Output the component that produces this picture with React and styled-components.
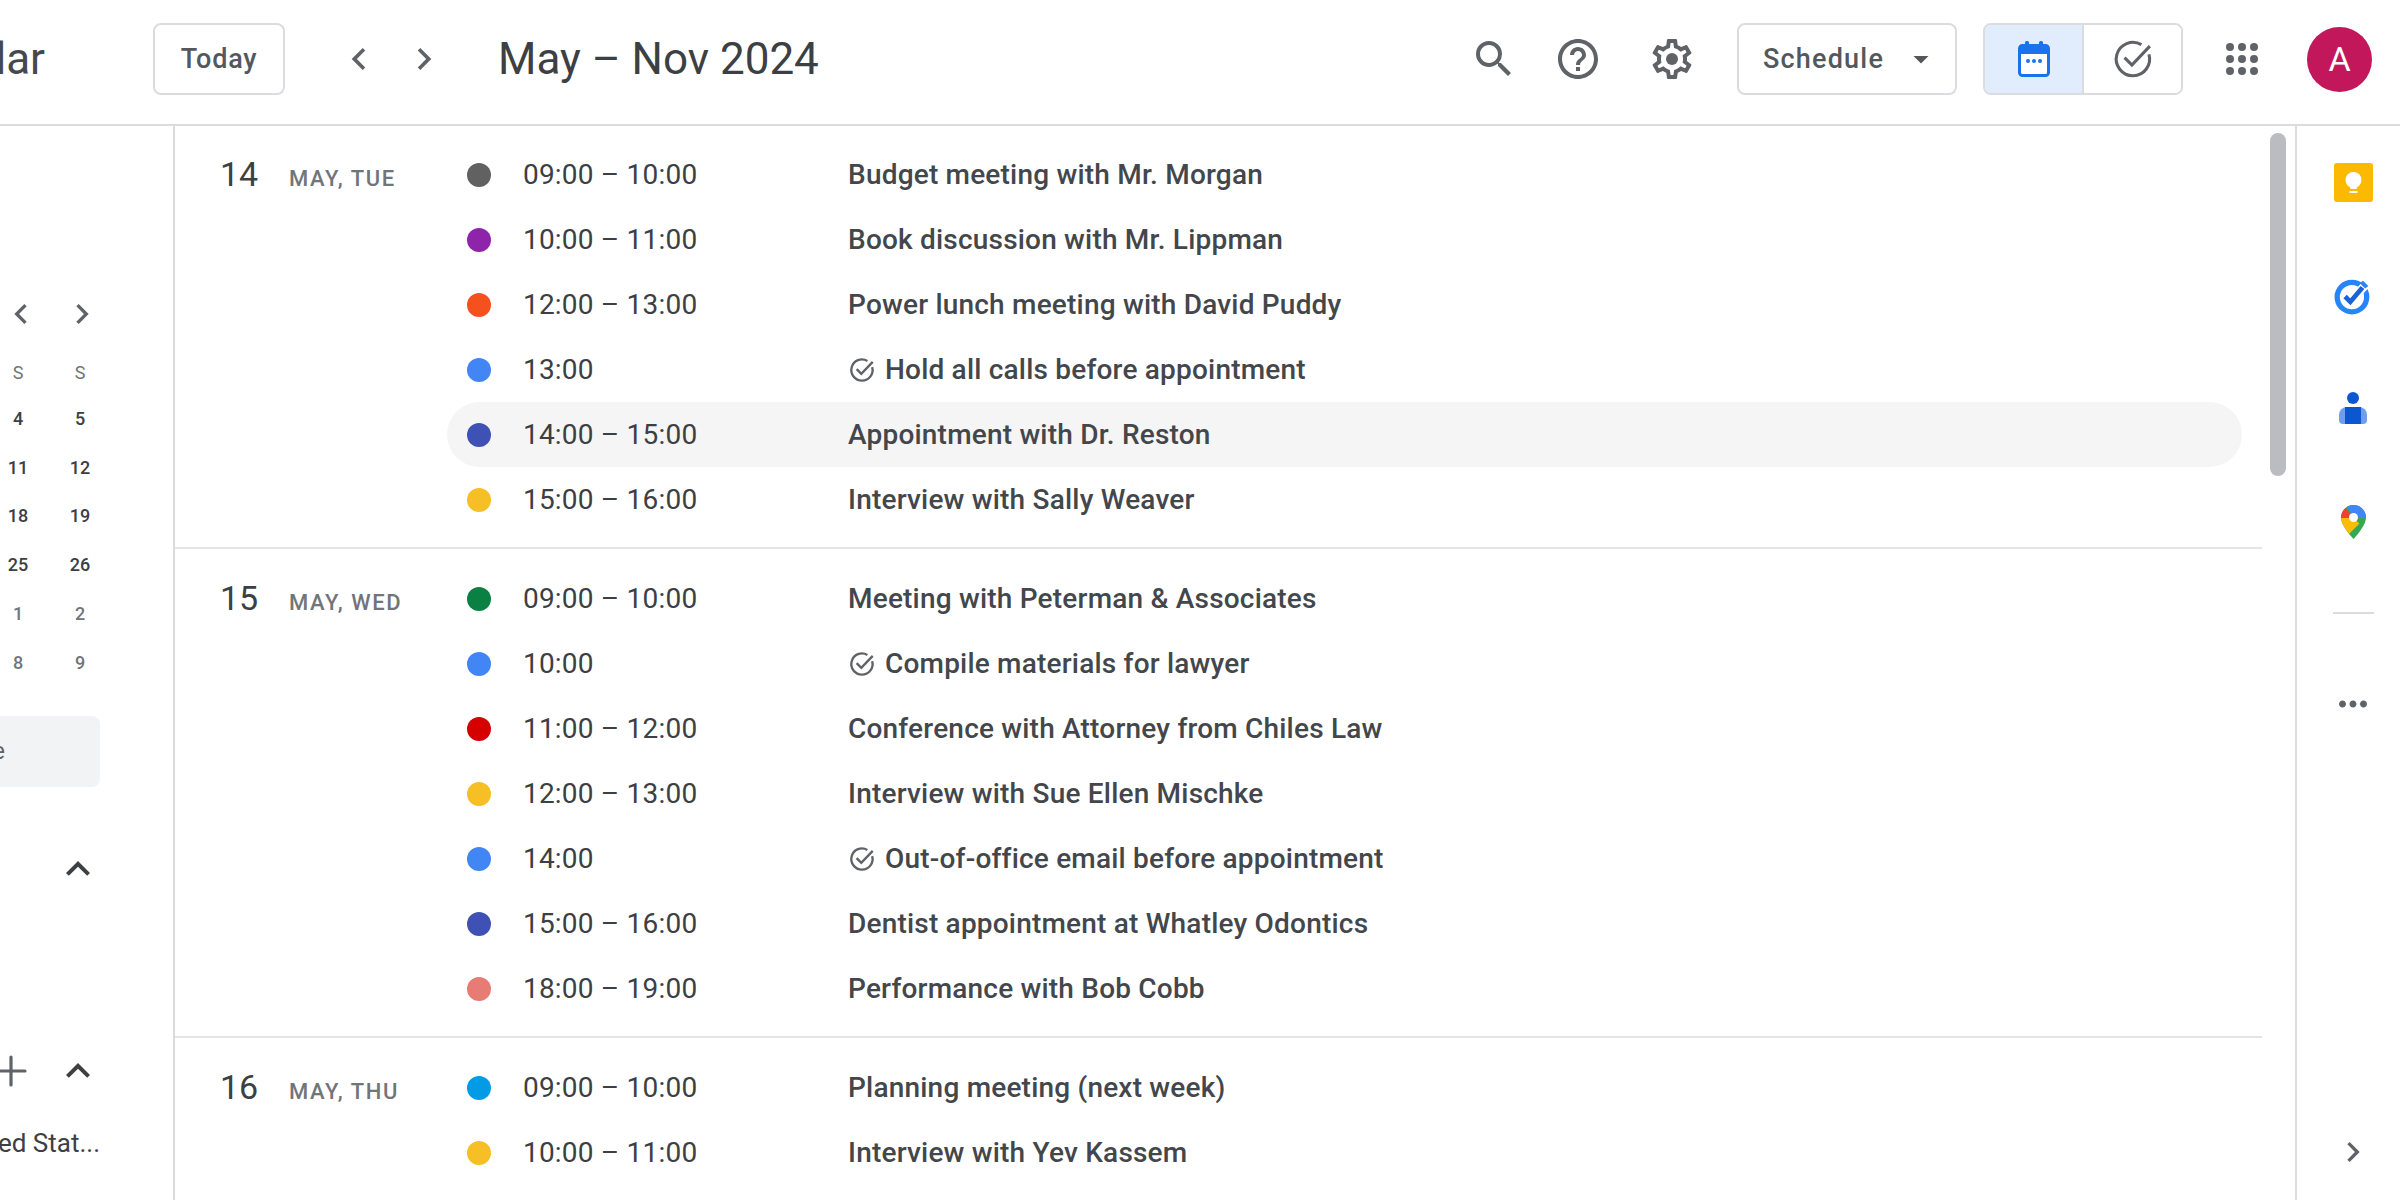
import React from "react";
import styled, { createGlobalStyle } from "styled-components";
import {
	MdChevronLeft,
	MdChevronRight,
	MdSearch,
	MdHelpOutline,
	MdArrowDropDown,
	MdExpandLess,
	MdMoreHoriz,
} from "react-icons/md";
import { Plus } from "lucide-react";

const GlobalStyle = createGlobalStyle`
	html, body {
		margin: 0;
		padding: 0;
		background: #fff;
	}
	body {
		font-family: Roboto, "Liberation Sans", sans-serif;
		color: #3c4043;
	}
`;

const Page = styled.div`
	width: 100%;
	height: 100vh;
	display: flex;
	flex-direction: column;
	overflow: hidden;
`;

const Header = styled.header`
	height: 118px;
	flex: none;
	display: flex;
	align-items: center;
	border-bottom: 2px solid #dadce0;
	padding: 0 28px 6px 0;
`;

const Brand = styled.div`
	width: 45px;
	flex: none;
	display: flex;
	justify-content: flex-end;
	overflow: hidden;
	font-size: 44px;
	line-height: 56px;
	color: #45494d;
`;

const OutlineButton = styled.div`
	height: 72px;
	box-sizing: border-box;
	border: 2px solid #dadce0;
	border-radius: 8px;
	display: flex;
	align-items: center;
	font-size: 27px;
	font-weight: 500;
	letter-spacing: ${({ $spacing }) => $spacing || 0.8}px;
	color: #54585c;
	background: #fff;
`;

const TodayButton = styled(OutlineButton)`
	width: 132px;
	margin-left: 108px;
	justify-content: center;
`;

const ScheduleButton = styled(OutlineButton)`
	width: 220px;
	margin-left: 41px;
	padding-left: 24px;
	gap: 19px;
`;

const IconButton = styled.div`
	width: 48px;
	height: 48px;
	flex: none;
	margin-left: ${({ $gap }) => $gap || 0}px;
	display: flex;
	align-items: center;
	justify-content: center;
	color: #5f6368;
`;

const Title = styled.h1`
	margin: 0 0 0 50px;
	font-size: 44px;
	line-height: 56px;
	font-weight: 400;
	color: #3c4043;
	white-space: nowrap;
`;

const RightTools = styled.div`
	margin-left: auto;
	display: flex;
	align-items: center;
`;

const Segmented = styled.div`
	width: 200px;
	height: 72px;
	margin-left: 26px;
	box-sizing: border-box;
	border: 2px solid #dadce0;
	border-radius: 8px;
	display: flex;
	overflow: hidden;
`;

const Segment = styled.div`
	flex: 1;
	display: flex;
	align-items: center;
	justify-content: center;
	background: ${({ $active }) => ($active ? "#e1edfc" : "#fff")};
	color: #5f6368;

	& + & {
		border-left: 2px solid #dadce0;
	}
`;

const Avatar = styled.div`
	width: 65px;
	height: 65px;
	margin-left: 41px;
	border-radius: 50%;
	background: #c2185b;
	color: #fff;
	font-size: 34px;
	display: flex;
	align-items: center;
	justify-content: center;
`;

const Body = styled.div`
	flex: 1;
	min-height: 0;
	display: flex;
`;

const Sidebar = styled.aside`
	width: 175px;
	flex: none;
	box-sizing: border-box;
	border-right: 2px solid #dadce0;
	overflow: hidden;
	display: flex;
	flex-direction: column;
	padding-top: 168px;
`;

const MiniNav = styled.div`
	height: 40px;
	flex: none;
	display: flex;
	justify-content: flex-end;
	align-items: center;
	gap: 21px;
	padding-right: 71px;
	color: #5f6368;
`;

const MiniGrid = styled.div`
	margin-top: 16px;
	padding-right: 62px;
	display: grid;
	justify-content: end;
	grid-template-columns: 62px 62px;
	grid-template-rows: 44px repeat(6, 48.8px);
`;

const MiniCell = styled.div`
	display: flex;
	align-items: center;
	justify-content: center;
	font-size: 18px;
	font-weight: ${({ $head }) => ($head ? 400 : 500)};
	color: ${({ $muted }) => ($muted ? "#70757a" : "#3c4043")};
`;

const PeopleSearch = styled.div`
	width: 100px;
	height: 71px;
	margin-top: 29px;
	flex: none;
	border-radius: 0 8px 8px 0;
	background: #f1f3f4;
	display: flex;
	align-items: center;
	justify-content: flex-end;
	padding-right: 95px;
	box-sizing: border-box;
	overflow: hidden;
	font-size: 24px;
	color: #5f6368;
	white-space: nowrap;
`;

const SideRow = styled.div`
	height: 40px;
	flex: none;
	margin-top: ${({ $top }) => $top}px;
	padding-right: 71px;
	display: flex;
	justify-content: flex-end;
	align-items: center;
	gap: 19px;
	color: #3c4043;

	svg {
		flex: none;
	}
`;

const HolidayLabel = styled.div`
	height: 40px;
	width: 100px;
	margin-top: 32px;
	flex: none;
	display: flex;
	justify-content: flex-end;
	align-items: center;
	overflow: hidden;
	font-size: 26px;
	color: #3c4043;
	white-space: nowrap;
`;

const ScheduleArea = styled.main`
	flex: 1;
	min-width: 0;
	position: relative;
	overflow: hidden;
	padding-right: 33px;
`;

const Scrollbar = styled.div`
	position: absolute;
	top: 7px;
	right: 9px;
	width: 16px;
	height: 343px;
	border-radius: 8px;
	background: #babcc2;
`;

const Day = styled.section`
	display: flex;
	padding: 17px 0 15px;
	border-bottom: 2px solid #e3e4e6;

	&:first-of-type {
		padding-top: 16px;
	}

	&:last-of-type {
		border-bottom: none;
	}
`;

const DayHead = styled.div`
	width: 272px;
	flex: none;
	height: 65px;
	box-sizing: border-box;
	padding-left: 45px;
	display: flex;
	align-items: baseline;
	line-height: 65px;
`;

const DayNumber = styled.span`
	width: 69px;
	flex: none;
	font-size: 34px;
	color: #3c4043;
`;

const DayLabel = styled.span`
	font-size: 22px;
	font-weight: 500;
	letter-spacing: 1.6px;
	color: #70757a;
	white-space: nowrap;
`;

const EventList = styled.div`
	flex: 1;
	min-width: 0;
	padding-right: 20px;
`;

const EventRow = styled.div`
	height: 65px;
	display: flex;
	align-items: center;
	padding-left: 20px;
	border-radius: 33px;
	background: ${({ $hover }) => ($hover ? "#f5f5f5" : "transparent")};
`;

const Dot = styled.span`
	width: 24px;
	height: 24px;
	flex: none;
	border-radius: 50%;
	margin-right: 32px;
	background: ${({ $color }) => $color};
`;

const EventTime = styled.span`
	width: 325px;
	flex: none;
	font-size: 28px;
	letter-spacing: 0.2px;
	color: #3c4043;
`;

const EventTitle = styled.span`
	display: flex;
	align-items: center;
	gap: 9px;
	font-size: 28px;
	font-weight: 500;
	letter-spacing: 0.2px;
	color: #43474b;
	white-space: nowrap;
`;

const SidePanel = styled.aside`
	width: 105px;
	flex: none;
	box-sizing: border-box;
	border-left: 2px solid #dadce0;
	display: flex;
	flex-direction: column;
	align-items: center;
	padding: 0 0 24px 9px;
`;

const PanelApp = styled.div`
	height: 113px;
	flex: none;
	display: flex;
	align-items: center;
	justify-content: center;
`;

const PanelRule = styled.div`
	width: 41px;
	height: 2px;
	flex: none;
	margin-top: 34px;
	background: #dadce0;
`;

const PanelTool = styled.div`
	height: 48px;
	flex: none;
	margin-top: ${({ $top }) => $top || 0};
	display: flex;
	align-items: center;
	justify-content: center;
	color: #5f6368;
`;

const GearIcon = () => (
	<svg width="48" height="48" viewBox="0 0 24 24" fill="currentColor">
		<path d="M19.43 12.98c.04-.32.07-.64.07-.98 0-.34-.03-.66-.07-.98l2.11-1.65c.19-.15.24-.42.12-.64l-2-3.46c-.09-.16-.26-.25-.44-.25-.06 0-.12.01-.17.03l-2.49 1c-.52-.4-1.08-.73-1.69-.98l-.38-2.65C14.46 2.18 14.25 2 14 2h-4c-.25 0-.46.18-.49.42l-.38 2.65c-.61.25-1.17.59-1.69.98l-2.49-1c-.06-.02-.12-.03-.18-.03-.17 0-.34.09-.43.25l-2 3.46c-.13.22-.07.49.12.64l2.11 1.65c-.04.32-.07.65-.07.98 0 .33.03.66.07.98l-2.11 1.65c-.19.15-.24.42-.12.64l2 3.46c.09.16.26.25.44.25.06 0 .12-.01.17-.03l2.49-1c.52.4 1.08.73 1.69.98l.38 2.65c.03.24.24.42.49.42h4c.25 0 .46-.18.49-.42l.38-2.65c.61-.25 1.17-.59 1.69-.98l2.49 1c.06.02.12.03.18.03.17 0 .34-.09.43-.25l2-3.46c.12-.22.07-.49-.12-.64l-2.11-1.65zm-1.98-1.71c.04.31.05.52.05.73 0 .21-.02.43-.05.73l-.14 1.13.89.7 1.08.84-.7 1.21-1.27-.51-1.04-.42-.9.68c-.43.32-.84.56-1.25.73l-1.06.43-.16 1.13-.2 1.35h-1.4l-.19-1.35-.16-1.13-1.06-.43c-.43-.18-.83-.41-1.23-.71l-.91-.7-1.06.43-1.27.51-.7-1.21 1.08-.84.89-.7-.14-1.13c-.03-.31-.05-.54-.05-.74s.02-.43.05-.73l.14-1.13-.89-.7-1.08-.84.7-1.21 1.27.51 1.04.42.9-.68c.43-.32.84-.56 1.25-.73l1.06-.43.16-1.13.2-1.35h1.39l.19 1.35.16 1.13 1.06.43c.43.18.83.41 1.23.71l.91.7 1.06-.43 1.27-.51.7 1.21-1.07.85-.89.7.14 1.13z" />
		<circle cx="12" cy="12" r="3" />
	</svg>
);

const TaskIcon = ({ size, width = 1.7 }) => (
	<svg width={size} height={size} viewBox="0 0 24 24" fill="none" stroke="#5f6368" strokeWidth={width}>
		<path d="M16.6 4.2A9.1 9.1 0 1 0 20.700 9.500" />
		<path d="M7.400 11.300l4 4L21.200 5" />
	</svg>
);

const CalendarIcon = () => (
	<svg width="32" height="36" viewBox="0 0 32 36">
		<rect x="7" y="0" width="4" height="7" rx="1.5" fill="#1a73e8" />
		<rect x="21" y="0" width="4" height="7" rx="1.5" fill="#1a73e8" />
		<rect x="1.5" y="4.5" width="29" height="30" rx="3" fill="#fff" stroke="#1a73e8" strokeWidth="3" />
		<path d="M1 8a4 4 0 0 1 4-4h22a4 4 0 0 1 4 4v5H1z" fill="#1a73e8" />
		<circle cx="10" cy="20" r="2" fill="#1a73e8" />
		<circle cx="16" cy="20" r="2" fill="#1a73e8" />
		<circle cx="22" cy="20" r="2" fill="#1a73e8" />
	</svg>
);

const AppsIcon = () => (
	<svg width="32" height="32" viewBox="0 0 32 32" fill="#5f6368">
		{[4, 16, 28].map((y) =>
			[4, 16, 28].map((x) => <circle key={`${x}-${y}`} cx={x} cy={y} r="4" />),
		)}
	</svg>
);

const KeepLogo = () => (
	<svg width="39" height="39" viewBox="0 0 39 39">
		<rect width="39" height="39" rx="3" fill="#fbb900" />
		<circle cx="19.5" cy="17" r="8" fill="#fff" />
		<path d="M15.5 22h8l-1 4h-6z" fill="#fff" />
		<rect x="15.5" y="28" width="8" height="2" fill="#fff" />
	</svg>
);

const TasksLogo = () => (
	<svg width="38" height="38" viewBox="0 0 36 36" fill="none">
		<circle cx="17" cy="19" r="14" stroke="#2684fc" strokeWidth="5" />
		<path d="M10.5 18.5l5 5L31 6" stroke="#fff" strokeWidth="8" />
		<path d="M10.5 18.5l5 5L27 10" stroke="#1a62d6" strokeWidth="4.5" />
		<path d="M27.5 3.5l5 5-3 2.500-5-5z" fill="#2684fc" />
	</svg>
);

const ContactsLogo = () => (
	<svg width="28" height="33" viewBox="0 0 28 33">
		<circle cx="14" cy="6" r="6" fill="#0b57d0" />
		<path d="M8 15h12a8 8 0 0 1 8 8v5a4 4 0 0 1-4 4H4a4 4 0 0 1-4-4v-5a8 8 0 0 1 8-8z" fill="#6f9df0" />
		<path d="M6 15h16v17H6z" fill="#0b57d0" />
	</svg>
);

const MapsLogo = () => (
	<svg width="25" height="34" viewBox="0 0 25 34">
		<defs>
			<clipPath id="pin">
				<path d="M12.500 0C5.600 0 0 5.600 0 12.500C0 21 12.500 34 12.500 34S25 21 25 12.500C25 5.600 19.400 0 12.500 0Z" />
			</clipPath>
		</defs>
		<g clipPath="url(#pin)">
			<rect width="25" height="34" fill="#34a853" />
			<path d="M0 0h25v13L12.500 13 5 0z" fill="#4285f4" />
			<path d="M4 2L0 8v6l12.500-1.500z" fill="#ea4335" />
			<path d="M0 13l12.500 0 6 5.500L7 30 0 20z" fill="#fbbc04" />
		</g>
		<circle cx="12.500" cy="12.500" r="4.500" fill="#fff" />
	</svg>
);

const miniRows = [
	["4", "5"],
	["11", "12"],
	["18", "19"],
	["25", "26"],
	["1", "2", true],
	["8", "9", true],
];

const days = [
	{
		date: "14",
		label: "May, Tue",
		events: [
			{ color: "#616161", time: "09:00 – 10:00", title: "Budget meeting with Mr. Morgan" },
			{ color: "#8e24aa", time: "10:00 – 11:00", title: "Book discussion with Mr. Lippman" },
			{ color: "#f4511e", time: "12:00 – 13:00", title: "Power lunch meeting with David Puddy" },
			{ color: "#4285f4", time: "13:00", title: "Hold all calls before appointment", task: true },
			{ color: "#3f51b5", time: "14:00 – 15:00", title: "Appointment with Dr. Reston", hover: true },
			{ color: "#f6bf26", time: "15:00 – 16:00", title: "Interview with Sally Weaver" },
		],
	},
	{
		date: "15",
		label: "May, Wed",
		events: [
			{ color: "#0b8043", time: "09:00 – 10:00", title: "Meeting with Peterman & Associates" },
			{ color: "#4285f4", time: "10:00", title: "Compile materials for lawyer", task: true },
			{ color: "#d50000", time: "11:00 – 12:00", title: "Conference with Attorney from Chiles Law" },
			{ color: "#f6bf26", time: "12:00 – 13:00", title: "Interview with Sue Ellen Mischke" },
			{ color: "#4285f4", time: "14:00", title: "Out-of-office email before appointment", task: true },
			{ color: "#3f51b5", time: "15:00 – 16:00", title: "Dentist appointment at Whatley Odontics" },
			{ color: "#e67c73", time: "18:00 – 19:00", title: "Performance with Bob Cobb" },
		],
	},
	{
		date: "16",
		label: "May, Thu",
		events: [
			{ color: "#039be5", time: "09:00 – 10:00", title: "Planning meeting (next week)" },
			{ color: "#f6bf26", time: "10:00 – 11:00", title: "Interview with Yev Kassem" },
		],
	},
];

const App = () => {
	return (
		<Page>
			<GlobalStyle />
			<Header>
				<Brand>Calendar</Brand>
				<TodayButton>Today</TodayButton>
				<IconButton $gap={50}>
					<MdChevronLeft size={44} />
				</IconButton>
				<IconButton $gap={17}>
					<MdChevronRight size={44} />
				</IconButton>
				<Title>May – Nov 2024</Title>
				<RightTools>
					<IconButton>
						<MdSearch size={48} />
					</IconButton>
					<IconButton $gap={36}>
						<MdHelpOutline size={48} />
					</IconButton>
					<IconButton $gap={46}>
						<GearIcon />
					</IconButton>
					<ScheduleButton $spacing={1.2}>
						Schedule
						<MdArrowDropDown size={36} />
					</ScheduleButton>
					<Segmented>
						<Segment $active>
							<CalendarIcon />
						</Segment>
						<Segment>
							<TaskIcon size={44} />
						</Segment>
					</Segmented>
					<IconButton $gap={35}>
						<AppsIcon />
					</IconButton>
					<Avatar>A</Avatar>
				</RightTools>
			</Header>
			<Body>
				<Sidebar>
					<MiniNav>
						<MdChevronLeft size={40} />
						<MdChevronRight size={40} />
					</MiniNav>
					<MiniGrid>
						<MiniCell $head $muted>S</MiniCell>
						<MiniCell $head $muted>S</MiniCell>
						{miniRows.map(([sat, sun, muted]) => (
							<React.Fragment key={sat}>
								<MiniCell $muted={muted}>{sat}</MiniCell>
								<MiniCell $muted={muted}>{sun}</MiniCell>
							</React.Fragment>
						))}
					</MiniGrid>
					<PeopleSearch>Search for people</PeopleSearch>
					<SideRow $top={62}>
						<MdExpandLess size={48} />
					</SideRow>
					<SideRow $top={162}>
						<Plus size={48} strokeWidth={1.6} color="#5f6368" />
						<MdExpandLess size={48} />
					</SideRow>
					<HolidayLabel>Holidays in United Stat...</HolidayLabel>
				</Sidebar>
				<ScheduleArea>
					{days.map((day) => (
						<Day key={day.date}>
							<DayHead>
								<DayNumber>{day.date}</DayNumber>
								<DayLabel>{day.label.toUpperCase()}</DayLabel>
							</DayHead>
							<EventList>
								{day.events.map((event) => (
									<EventRow key={event.title} $hover={event.hover}>
										<Dot $color={event.color} />
										<EventTime>{event.time}</EventTime>
										<EventTitle>
											{event.task && <TaskIcon size={28} width={2} />}
											{event.title}
										</EventTitle>
									</EventRow>
								))}
							</EventList>
						</Day>
					))}
					<Scrollbar />
				</ScheduleArea>
				<SidePanel>
					<PanelApp>
						<KeepLogo />
					</PanelApp>
					<PanelApp>
						<TasksLogo />
					</PanelApp>
					<PanelApp>
						<ContactsLogo />
					</PanelApp>
					<PanelApp>
						<MapsLogo />
					</PanelApp>
					<PanelRule />
					<PanelTool $top="66px">
						<MdMoreHoriz size={42} />
					</PanelTool>
					<PanelTool $top="auto">
						<MdChevronRight size={40} />
					</PanelTool>
				</SidePanel>
			</Body>
		</Page>
	);
};

export default App;
